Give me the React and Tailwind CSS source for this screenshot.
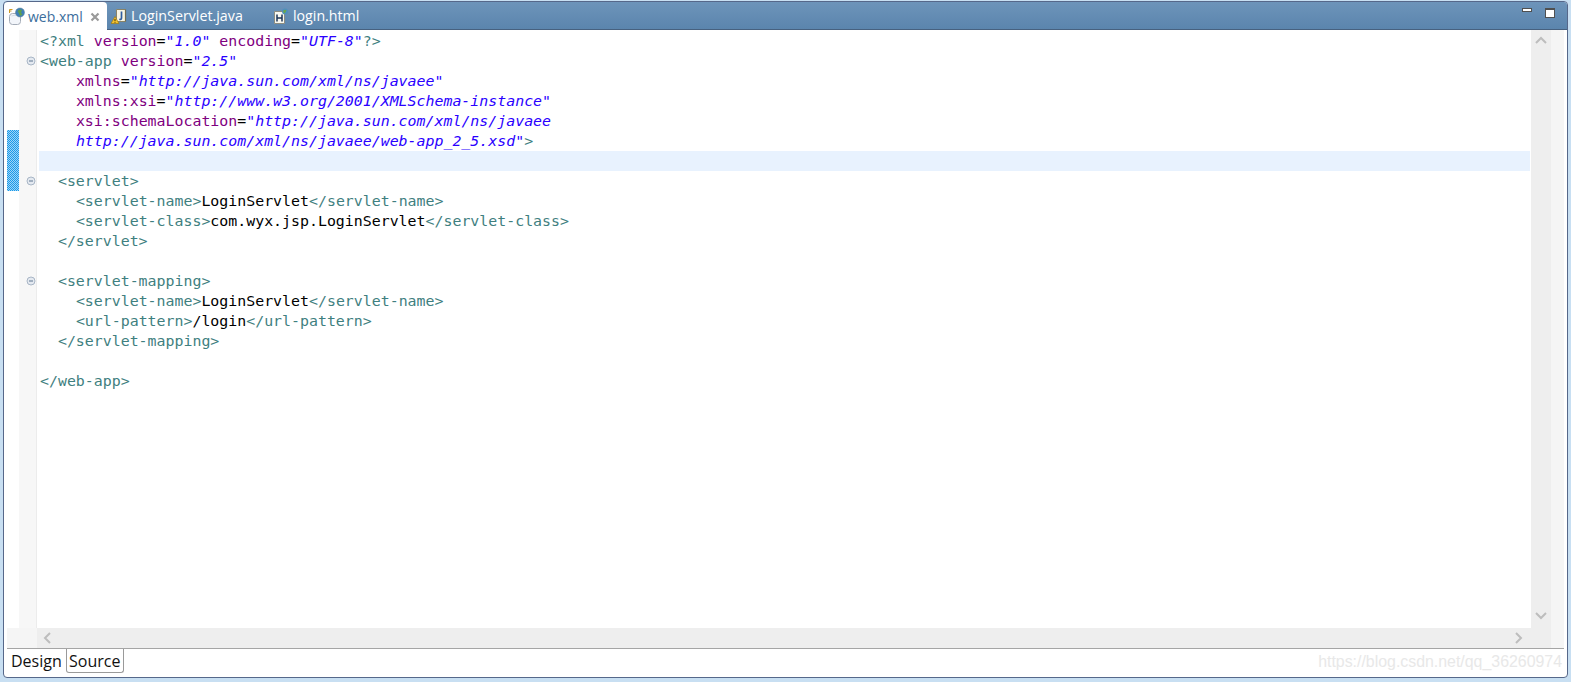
import React from "react";

const T = ({ c }) => <span className="text-[#3f7f7f]">{c}</span>;
const A = ({ c }) => <span className="text-[#7f007f]">{c}</span>;
const V = ({ c }) => <span className="text-[#2a00ff] italic">{c}</span>;
const K = ({ c }) => <span className="text-black">{c}</span>;

const lines = [
  [<T c="<?" key="a" />, <T c="xml " key="b" />, <A c="version" key="c" />, <span key="d">=</span>, <V c='"1.0"' key="e" />, " ", <A c="encoding" key="f" />, <span key="g">=</span>, <V c='"UTF-8"' key="h" />, <T c="?>" key="i" />],
  [<T c="<web-app " key="a" />, <A c="version" key="b" />, "=", <V c='"2.5"' key="c" />],
  ["    ", <A c="xmlns" key="a" />, "=", <V c='"http://java.sun.com/xml/ns/javaee"' key="b" />],
  ["    ", <A c="xmlns:xsi" key="a" />, "=", <V c='"http://www.w3.org/2001/XMLSchema-instance"' key="b" />],
  ["    ", <A c="xsi:schemaLocation" key="a" />, "=", <V c='"http://java.sun.com/xml/ns/javaee' key="b" />],
  ["    ", <V c='http://java.sun.com/xml/ns/javaee/web-app_2_5.xsd"' key="a" />, <T c=">" key="b" />],
  [],
  ["  ", <T c="<servlet>" key="a" />],
  ["    ", <T c="<servlet-name>" key="a" />, <K c="LoginServlet" key="b" />, <T c="</servlet-name>" key="c" />],
  ["    ", <T c="<servlet-class>" key="a" />, <K c="com.wyx.jsp.LoginServlet" key="b" />, <T c="</servlet-class>" key="c" />],
  ["  ", <T c="</servlet>" key="a" />],
  [],
  ["  ", <T c="<servlet-mapping>" key="a" />],
  ["    ", <T c="<servlet-name>" key="a" />, <K c="LoginServlet" key="b" />, <T c="</servlet-name>" key="c" />],
  ["    ", <T c="<url-pattern>" key="a" />, <K c="/login" key="b" />, <T c="</url-pattern>" key="c" />],
  ["  ", <T c="</servlet-mapping>" key="a" />],
  [],
  [<T c="</web-app>" key="a" />],
];

const foldLines = new Set([1, 7, 12]);

function Fold() {
  return (
    <svg width="10" height="10" viewBox="0 0 10 10">
      <circle cx="5" cy="5" r="4" fill="#e4e9f0" stroke="#a9b6c6" />
      <path d="M3 5h4" stroke="#5f7690" />
    </svg>
  );
}

function XmlIcon() {
  return (
    <svg width="18" height="19" viewBox="0 0 18 19">
      <rect x="1.5" y="6.5" width="11" height="11" rx="3" fill="#f2f5fa" stroke="#a4acb8" />
      <path d="M3.5 9 q3-1.5 7 0" stroke="#d5dbe5" fill="none" />
      <circle cx="12" cy="5.5" r="4.5" fill="#3f7fb8" stroke="#5c7f8f" strokeWidth="0.5" />
      <path d="M9.5 4 q2-2.5 4.5-1 l-1 2.5 1.5 2 -2.5 1.5 -1-2.5z" fill="#5f9f4f" />
      <path d="M4.5 2.5H1.5V6M1.5 4h2" stroke="#d09a20" fill="none" />
    </svg>
  );
}

function JavaIcon() {
  return (
    <svg width="17" height="17" viewBox="0 0 17 17">
      <path d="M5.5 1.5h9v12h-9z" fill="#f8f5e4" stroke="#8b8466" />
      <path d="M14.5 1.5v12" stroke="#6f6a50" strokeWidth="1.2" />
      <path d="M10.5 3.5v6.5q0 1.8-2.2 1.2" stroke="#2f5da0" strokeWidth="1.7" fill="none" />
      <path d="M4 8.5L8 15.5H0z" fill="#f2c230" stroke="#9c7a14" strokeWidth="0.7" />
      <path d="M4 11v2M4 13.8v.9" stroke="#3a2a00" />
    </svg>
  );
}

function HtmlIcon() {
  return (
    <svg width="17" height="17" viewBox="0 0 17 17">
      <path d="M1.5 3.5h10v12h-10z" fill="#f8f8f0" stroke="#8d8d80" />
      <path d="M4 6.5v7M9 6.5v7M4 10h5" stroke="#1d3557" strokeWidth="1.5" fill="none" />
      <circle cx="12" cy="3.5" r="3" fill="#4f8fc0" />
      <path d="M10 3q1.5-2 3.5-1l-1 2.5-1.5 1z" fill="#6aa84f" />
    </svg>
  );
}

export default function App() {
  return (
    <div className="w-[1571px] h-[682px] bg-[#c8dff2] pt-[1px] pl-[3px] font-['Liberation_Sans',sans-serif] overflow-hidden">
      <div className="w-[1565px] h-[677px] flex flex-col bg-white border border-[#56688a] rounded-[4px] overflow-hidden">
        {/* Title / tab bar */}
        <div className="h-[28px] shrink-0 flex items-stretch bg-gradient-to-b from-[#6d94ba] to-[#5b85ad] border-b border-[#47617f]">
          <div className="w-[103px] h-[28px] bg-white rounded-t-[4px] flex items-center pl-[4px] pt-[1px] text-[14px] font-['Open_Sans',sans-serif] text-[#3c6e9c]">
            <XmlIcon />
            <span className="ml-[2px]">web.xml</span>
            <svg className="ml-[7px]" width="10" height="10" viewBox="0 0 10 10"><path d="M1.5 1.5l7 7M8.5 1.5l-7 7" stroke="#9a9a9a" strokeWidth="2.2" /></svg>
          </div>
          <div className="w-[166px] flex items-center pl-[4px] pt-[1px] text-[14.25px] font-['Open_Sans',sans-serif] text-white">
            <JavaIcon />
            <span className="ml-[3px]">LoginServlet.java</span>
          </div>
          <div className="flex items-center pt-[1px] text-[14.2px] font-['Open_Sans',sans-serif] text-white">
            <HtmlIcon />
            <span className="ml-[3px]">login.html</span>
          </div>
          <div className="ml-auto flex items-start pt-[6px] pr-[12px] gap-[13px]">
            <div className="w-[10px] h-[4px] bg-white border border-[#505050]" />
            <div className="w-[10px] h-[10px] bg-white border border-[#505050] border-t-2" />
          </div>
        </div>

        {/* Editor */}
        <div className="flex-1 flex flex-col min-h-0 px-[3px]">
          <div className="flex-1 flex min-h-0">
            <div className="w-[12px] shrink-0 flex flex-col pt-[100px]">
              <div className="h-[61px] bg-[repeating-conic-gradient(#1b9ae8_0_25%,#9ed4f7_0_50%)] bg-[length:2px_2px]" />
            </div>
            <div className="w-[18px] shrink-0 bg-[#f7f7f7] border-r border-[#ececec] flex flex-col pt-[1px]">
              {lines.map((_, i) => (
                <div key={i} className="h-[20px] flex items-center justify-end">
                  {foldLines.has(i) && <Fold />}
                </div>
              ))}
            </div>
            <div className="flex-1 min-w-0 pl-[2px] pr-[1px] pt-[1px] font-['DejaVu_Sans_Mono',monospace] text-[14.9px] leading-[20px] whitespace-pre text-black">
              {lines.map((l, i) => (
                <div key={i} className={i === 6 ? "h-[20px] pl-[1px] bg-[#e8f2fe]" : "h-[20px] pl-[1px]"}>
                  {l}
                </div>
              ))}
            </div>
            <div className="w-[20px] shrink-0 bg-[#eeeeee] flex flex-col justify-between items-center pt-[5px] pb-[7px] text-[#bdbdbd]">
              <svg width="12" height="10" viewBox="0 0 12 10"><path d="M1 8l5-5 5 5" fill="none" stroke="currentColor" strokeWidth="2" /></svg>
              <svg width="12" height="10" viewBox="0 0 12 10"><path d="M1 2l5 5 5-5" fill="none" stroke="currentColor" strokeWidth="2" /></svg>
            </div>
            <div className="w-[13px] shrink-0 bg-[#f5f5f5]" />
          </div>
          <div className="h-[20px] shrink-0 flex">
            <div className="w-[30px] bg-[#f5f5f5]" />
            <div className="flex-1 flex items-center justify-between pl-[5px] pr-[27px] bg-[#eeeeee] text-[#bdbdbd]">
              <svg width="10" height="12" viewBox="0 0 10 12"><path d="M8 1L3 6l5 5" fill="none" stroke="currentColor" strokeWidth="2" /></svg>
              <svg width="10" height="12" viewBox="0 0 10 12"><path d="M2 1l5 5-5 5" fill="none" stroke="currentColor" strokeWidth="2" /></svg>
            </div>
            <div className="w-[13px] bg-[#f5f5f5]" />
          </div>
        </div>

        {/* Bottom tabs */}
        <div className="h-[29px] shrink-0 px-[3px]">
          <div className="h-[24px] flex items-start border-t border-[#a5a5a5] relative">
            <div className="w-[59px] h-[23px] bg-white flex items-center pl-[4px] text-[16px] font-['Open_Sans',sans-serif] text-[#111]">Design</div>
            <div className="w-[58px] h-[24px] bg-white border border-t-0 border-[#9a9a9a] rounded-b-[3px] flex items-center pl-[2px] text-[16px] font-['Open_Sans',sans-serif] text-[#111]">Source</div>
            <div className="absolute right-[2px] top-[3px] text-[15.9px] leading-[20px] text-[#e8e8e8]">https://blog.csdn.net/qq_36260974</div>
          </div>
        </div>
      </div>
    </div>
  );
}
